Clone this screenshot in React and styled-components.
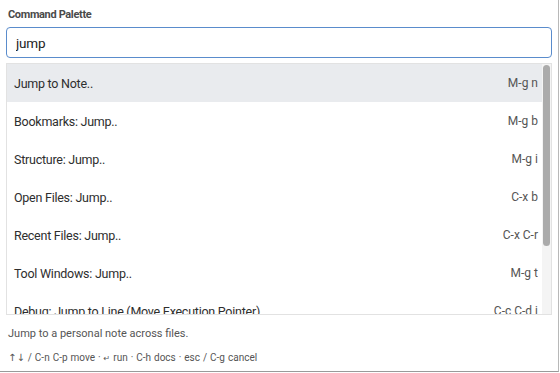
import { useState } from 'react';
import styled, { createGlobalStyle } from 'styled-components';

const GlobalStyle = createGlobalStyle`
  html, body {
    margin: 0;
    padding: 0;
    background: #ffffff;
  }
  body {
    font-family: Roboto, "Noto Sans", sans-serif;
    color: #333;
  }
`;

const commands = [
  { label: 'Jump to Note..', keys: 'M-g n' },
  { label: 'Bookmarks: Jump..', keys: 'M-g b' },
  { label: 'Structure: Jump..', keys: 'M-g i' },
  { label: 'Open Files: Jump..', keys: 'C-x b' },
  { label: 'Recent Files: Jump..', keys: 'C-x C-r' },
  { label: 'Tool Windows: Jump..', keys: 'M-g t' },
  { label: 'Debug: Jump to Line (Move Execution Pointer)', keys: 'C-c C-d j' },
  { label: 'Navigate: Jump to Source', keys: 'F4' },
  { label: 'Jump to Last Change', keys: 'C-x C-/' },
];

// share of the list that is visible, used for the scrollbar thumb
const visibleShare = 250 / (commands.length * 38);

export default function App() {
  const [query, setQuery] = useState('jump');
  const [active] = useState(0);

  return (
    <>
      <GlobalStyle />
      <Panel>
        <Title>Command Palette</Title>
        <SearchInput
          autoFocus
          value={query}
          onChange={(e) => setQuery(e.target.value)}
        />
        <List>
          <Rows>
            {commands.map((c, i) => (
              <Row key={c.label} $active={i === active}>
                <Label>{c.label}</Label>
                <Keys>{c.keys}</Keys>
              </Row>
            ))}
          </Rows>
          <Track>
            <Thumb style={{ height: `${Math.round(visibleShare * 100)}%` }} />
          </Track>
        </List>
        <Description>Jump to a personal note across files.</Description>
        <Hints>
          <Glyph>↑↓</Glyph> / C-n C-p move · <Glyph $small>↵</Glyph> run · C-h docs · esc / C-g cancel
        </Hints>
      </Panel>
    </>
  );
}

const Panel = styled.div`
  box-sizing: border-box;
  width: 559px;
  height: 372px;
  border-right: 1px solid #b8b8b8;
  border-bottom: 1px solid #9a9a9a;
  padding: 6px 6px 0 6px;
  display: flex;
  flex-direction: column;
`;

const Title = styled.div`
  font-size: 11px;
  font-weight: 700;
  letter-spacing: -0.35px;
  color: #4a4a4a;
  padding: 2px 0 0 2px;
  height: 18px;
`;

const SearchInput = styled.input`
  box-sizing: border-box;
  height: 31px;
  width: 100%;
  margin: 1px 0 0;
  border: 1px solid #5a8ccc;
  border-radius: 4px;
  padding: 0 9px;
  font-family: Roboto, "Noto Sans", sans-serif;
  font-size: 13.5px;
  letter-spacing: -0.2px;
  color: #222;
  caret-color: #222;
  outline: none;
  background: #fff;
`;

const List = styled.div`
  box-sizing: border-box;
  margin-top: 5px;
  height: 252px;
  border: 1px solid #e2e2e2;
  display: flex;
  overflow: hidden;
`;

const Rows = styled.div`
  flex: 1;
  min-width: 0;
`;

const Track = styled.div`
  width: 9px;
  flex: none;
  background: #f4f4f4;
  padding: 1px;
  box-sizing: border-box;
`;

const Thumb = styled.div`
  width: 100%;
  background: #ababab;
  border-radius: 4px;
`;

const Row = styled.div`
  height: 38px;
  display: flex;
  align-items: center;
  justify-content: space-between;
  padding: 0 4px 0 7px;
  background: ${(p) => (p.$active ? '#e9ebee' : 'transparent')};
`;

const Label = styled.span`
  font-size: 12.5px;
  letter-spacing: -0.25px;
  color: #2e2e2e;
  white-space: nowrap;
`;

const Keys = styled.span`
  font-size: 12px;
  color: #555;
  white-space: nowrap;
`;

const Description = styled.div`
  font-size: 11px;
  color: #555;
  padding: 12px 0 0 2px;
`;

const Hints = styled.div`
  font-size: 10px;
  color: #555;
  padding: 12px 0 0 2px;
  white-space: nowrap;
  word-spacing: 0.5px;
`;

const Glyph = styled.span`
  font-family: "DejaVu Sans", sans-serif;
  font-size: ${(p) => (p.$small ? '8px' : '10px')};
`;
